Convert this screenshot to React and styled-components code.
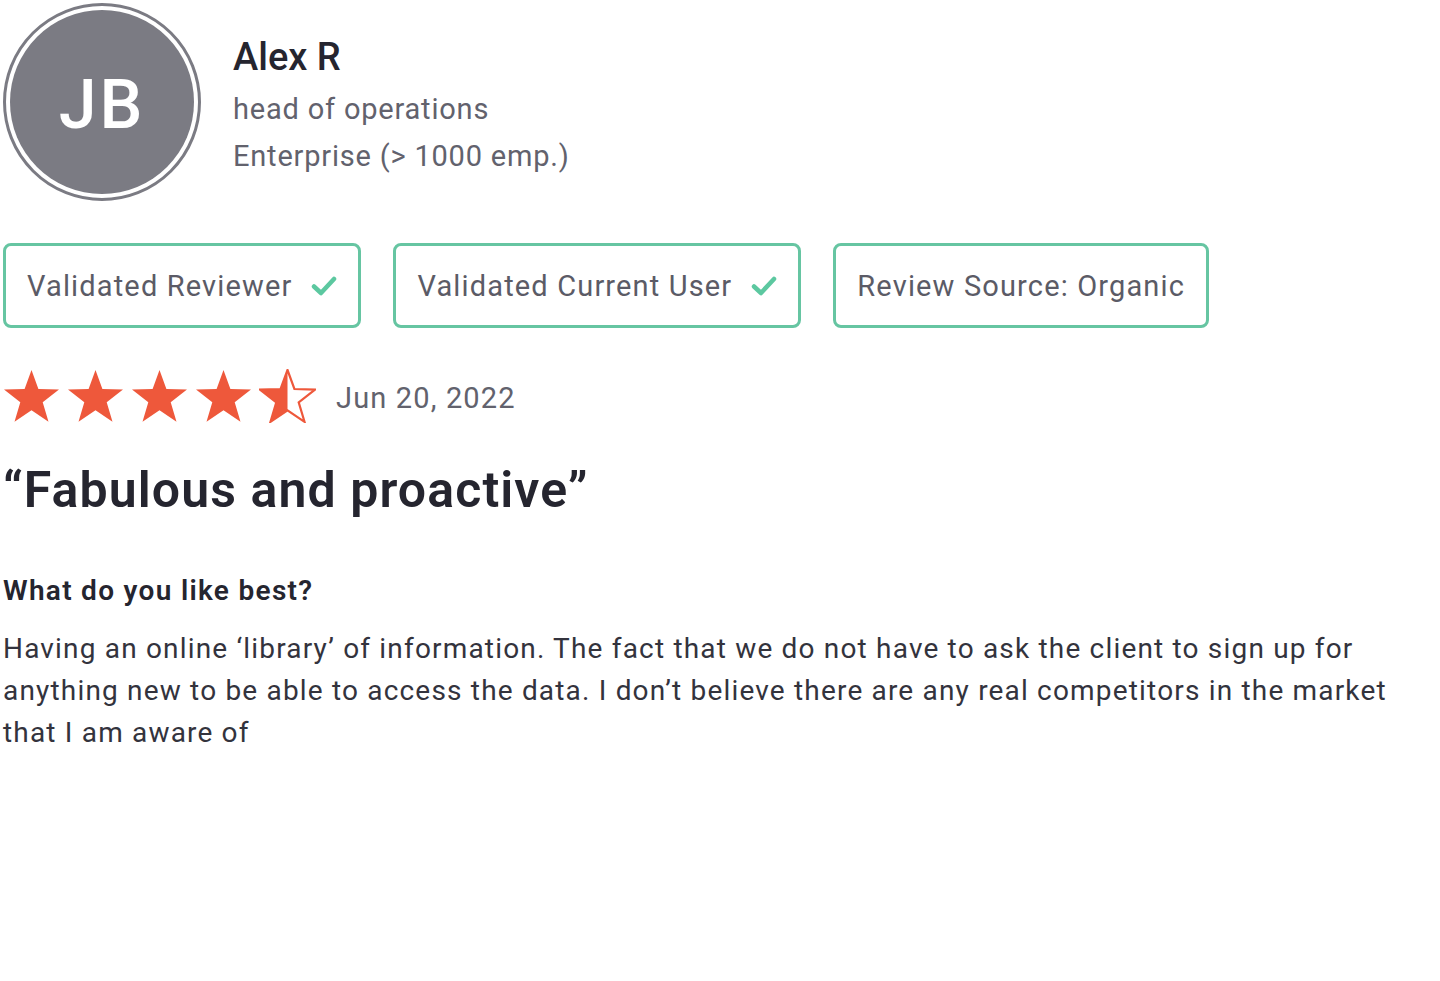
import React from 'react';
import styled, { createGlobalStyle } from 'styled-components';

const GlobalStyle = createGlobalStyle`
  body {
    margin: 0;
    background: #ffffff;
    font-family: 'Roboto', 'Liberation Sans', sans-serif;
    color: #25252f;
  }
`;

const Page = styled.div`
  padding: 3px 0 0 3px;
  width: 1437px;
  min-height: 978px;
`;

const Header = styled.div`
  display: flex;
  align-items: flex-start;
  gap: 32px;
`;

const Avatar = styled.div`
  width: 192px;
  height: 192px;
  border-radius: 50%;
  border: 3px solid #7b7b83;
  display: flex;
  align-items: center;
  justify-content: center;
  flex-shrink: 0;
`;

const AvatarInner = styled.div`
  width: 184px;
  height: 184px;
  box-sizing: border-box;
  padding-top: 6px;
  border-radius: 50%;
  background: #7b7b83;
  color: #ffffff;
  font-size: 68px;
  font-weight: 500;
  display: flex;
  align-items: center;
  justify-content: center;
  letter-spacing: 3px;
`;

const Info = styled.div`
  display: flex;
  flex-direction: column;
  padding-top: 30px;
`;

const Name = styled.div`
  font-size: 38px;
  font-weight: 500;
  line-height: 48px;
  margin-bottom: 5px;
  color: #25252f;
`;

const Meta = styled.div`
  font-size: 29px;
  line-height: 47px;
  letter-spacing: 0.8px;
  color: #62626d;
`;

const Badges = styled.div`
  display: flex;
  gap: 32px;
  margin-top: 42px;
`;

const Badge = styled.div`
  height: 85px;
  box-sizing: border-box;
  border: 3px solid #66c5a2;
  border-radius: 8px;
  display: flex;
  align-items: center;
  gap: 19px;
  padding: 0 21px 0 21px;
  font-size: 29px;
  letter-spacing: 1.15px;
  color: #5b5b66;
`;

const RatingRow = styled.div`
  display: flex;
  align-items: center;
  gap: 20px;
  margin-top: 41px;
`;

const Stars = styled.div`
  display: flex;
  gap: 7px;
`;

const DateText = styled.div`
  font-size: 29px;
  letter-spacing: 1.15px;
  padding-top: 4px;
  color: #62626d;
`;

const Title = styled.h1`
  margin: 37px 0 0;
  font-size: 50px;
  font-weight: 600;
  line-height: 60px;
  letter-spacing: 1.1px;
  color: #25252f;
`;

const Question = styled.h3`
  margin: 51px 0 0;
  font-size: 28px;
  font-weight: 600;
  line-height: 40px;
  letter-spacing: 1.3px;
  color: #25252f;
`;

const Answer = styled.p`
  margin: 17px 0 0;
  font-size: 28px;
  line-height: 42px;
  letter-spacing: 1.18px;
  color: #33333d;
  max-width: 1420px;
`;

const Check = () => (
  <svg width="26" height="22" viewBox="0 0 26 22">
    <path d="M3 11.5 L10 18 L23 4" fill="none" stroke="#5cc8a0" strokeWidth="4.5" strokeLinecap="round" strokeLinejoin="round" />
  </svg>
);

const STAR = 'M28.5 1 L35.4 20 L56 20.6 L39.7 33.3 L45.5 52.8 L28.5 41.3 L11.5 52.8 L17.3 33.3 L1 20.6 L21.6 20 Z';

const Star = ({ half }) => (
  <svg width="57" height="54" viewBox="0 0 57 54">
    {half ? (
      <>
        <defs>
          <clipPath id="halfclip">
            <rect x="0" y="0" width="28.5" height="54" />
          </clipPath>
        </defs>
        <path d={STAR} fill="none" stroke="#ee583b" strokeWidth="2.2" strokeLinejoin="miter" />
        <path d={STAR} fill="#ee583b" clipPath="url(#halfclip)" />
      </>
    ) : (
      <path d={STAR} fill="#ee583b" />
    )}
  </svg>
);

const App = () => {
  return (
    <>
      <GlobalStyle />
      <Page>
        <Header>
          <Avatar>
            <AvatarInner>JB</AvatarInner>
          </Avatar>
          <Info>
            <Name>Alex R</Name>
            <Meta>head of operations</Meta>
            <Meta>Enterprise (&gt; 1000 emp.)</Meta>
          </Info>
        </Header>
        <Badges>
          <Badge>Validated Reviewer <Check /></Badge>
          <Badge>Validated Current User <Check /></Badge>
          <Badge>Review Source: Organic</Badge>
        </Badges>
        <RatingRow>
          <Stars>
            <Star />
            <Star />
            <Star />
            <Star />
            <Star half />
          </Stars>
          <DateText>Jun 20, 2022</DateText>
        </RatingRow>
        <Title>“Fabulous and proactive”</Title>
        <Question>What do you like best?</Question>
        <Answer>
          Having an online ‘library’ of information. The fact that we do not have to ask the client to sign up for
          anything new to be able to access the data. I don’t believe there are any real competitors in the market
          that I am aware of
        </Answer>
      </Page>
    </>
  );
};

export default App;
